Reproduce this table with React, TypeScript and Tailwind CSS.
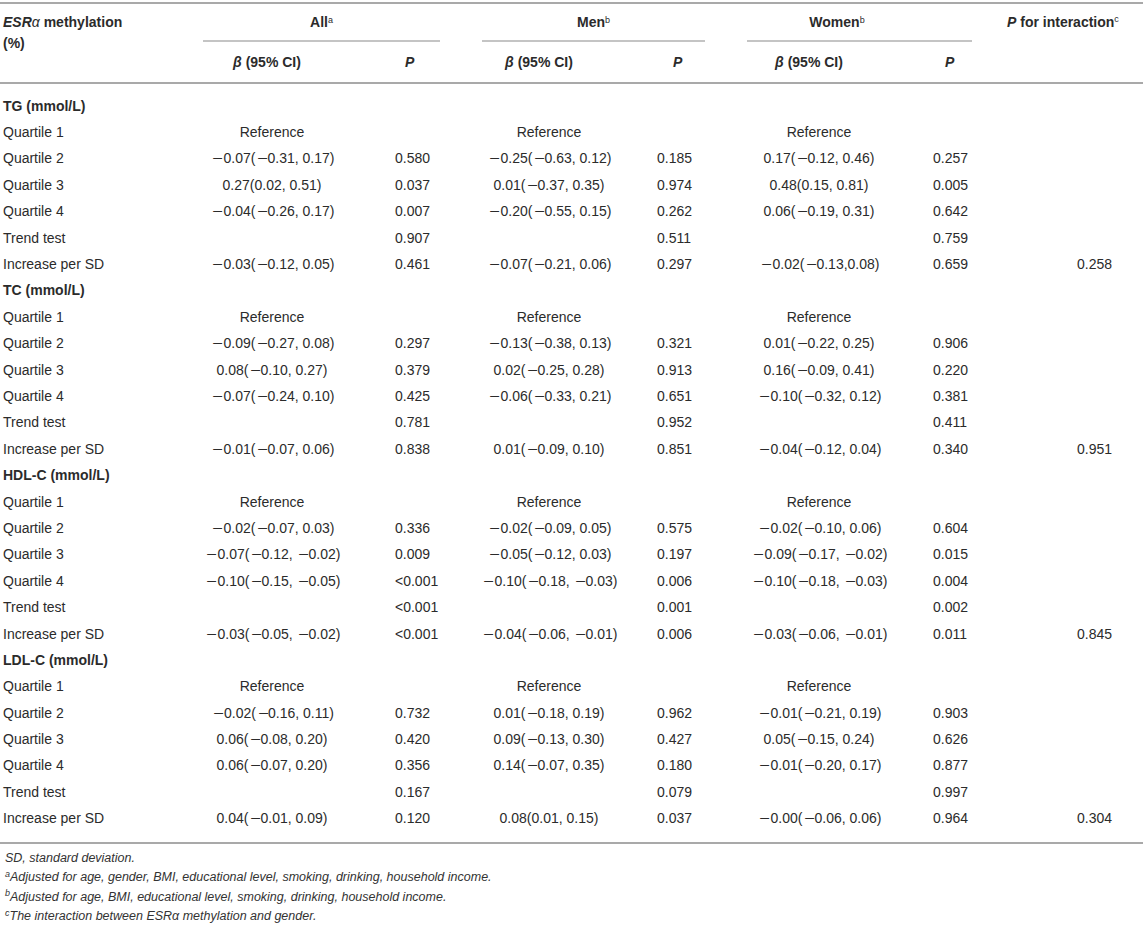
const COLS = "grid grid-cols-[203px_138px_129px_158px_112px_158px_102px_143px]";

type Row = {
  label: string;
  all?: string;
  allP?: string;
  men?: string;
  menP?: string;
  women?: string;
  womenP?: string;
  inter?: string;
};

type Group = { title: string; rows: Row[] };

const REF = { all: "Reference", men: "Reference", women: "Reference" };

const GROUPS: Group[] = [
  {
    title: "TG (mmol/L)",
    rows: [
      { label: "Quartile 1", ...REF },
      { label: "Quartile 2", all: "−0.07(−0.31, 0.17)", allP: "0.580", men: "−0.25(−0.63, 0.12)", menP: "0.185", women: "0.17(−0.12, 0.46)", womenP: "0.257" },
      { label: "Quartile 3", all: "0.27(0.02, 0.51)", allP: "0.037", men: "0.01(−0.37, 0.35)", menP: "0.974", women: "0.48(0.15, 0.81)", womenP: "0.005" },
      { label: "Quartile 4", all: "−0.04(−0.26, 0.17)", allP: "0.007", men: "−0.20(−0.55, 0.15)", menP: "0.262", women: "0.06(−0.19, 0.31)", womenP: "0.642" },
      { label: "Trend test", allP: "0.907", menP: "0.511", womenP: "0.759" },
      { label: "Increase per SD", all: "−0.03(−0.12, 0.05)", allP: "0.461", men: "−0.07(−0.21, 0.06)", menP: "0.297", women: "−0.02(−0.13,0.08)", womenP: "0.659", inter: "0.258" },
    ],
  },
  {
    title: "TC (mmol/L)",
    rows: [
      { label: "Quartile 1", ...REF },
      { label: "Quartile 2", all: "−0.09(−0.27, 0.08)", allP: "0.297", men: "−0.13(−0.38, 0.13)", menP: "0.321", women: "0.01(−0.22, 0.25)", womenP: "0.906" },
      { label: "Quartile 3", all: "0.08(−0.10, 0.27)", allP: "0.379", men: "0.02(−0.25, 0.28)", menP: "0.913", women: "0.16(−0.09, 0.41)", womenP: "0.220" },
      { label: "Quartile 4", all: "−0.07(−0.24, 0.10)", allP: "0.425", men: "−0.06(−0.33, 0.21)", menP: "0.651", women: "−0.10(−0.32, 0.12)", womenP: "0.381" },
      { label: "Trend test", allP: "0.781", menP: "0.952", womenP: "0.411" },
      { label: "Increase per SD", all: "−0.01(−0.07, 0.06)", allP: "0.838", men: "0.01(−0.09, 0.10)", menP: "0.851", women: "−0.04(−0.12, 0.04)", womenP: "0.340", inter: "0.951" },
    ],
  },
  {
    title: "HDL-C (mmol/L)",
    rows: [
      { label: "Quartile 1", ...REF },
      { label: "Quartile 2", all: "−0.02(−0.07, 0.03)", allP: "0.336", men: "−0.02(−0.09, 0.05)", menP: "0.575", women: "−0.02(−0.10, 0.06)", womenP: "0.604" },
      { label: "Quartile 3", all: "−0.07(−0.12, −0.02)", allP: "0.009", men: "−0.05(−0.12, 0.03)", menP: "0.197", women: "−0.09(−0.17, −0.02)", womenP: "0.015" },
      { label: "Quartile 4", all: "−0.10(−0.15, −0.05)", allP: "<0.001", men: "−0.10(−0.18, −0.03)", menP: "0.006", women: "−0.10(−0.18, −0.03)", womenP: "0.004" },
      { label: "Trend test", allP: "<0.001", menP: "0.001", womenP: "0.002" },
      { label: "Increase per SD", all: "−0.03(−0.05, −0.02)", allP: "<0.001", men: "−0.04(−0.06, −0.01)", menP: "0.006", women: "−0.03(−0.06, −0.01)", womenP: "0.011", inter: "0.845" },
    ],
  },
  {
    title: "LDL-C (mmol/L)",
    rows: [
      { label: "Quartile 1", ...REF },
      { label: "Quartile 2", all: "−0.02(−0.16, 0.11)", allP: "0.732", men: "0.01(−0.18, 0.19)", menP: "0.962", women: "−0.01(−0.21, 0.19)", womenP: "0.903" },
      { label: "Quartile 3", all: "0.06(−0.08, 0.20)", allP: "0.420", men: "0.09(−0.13, 0.30)", menP: "0.427", women: "0.05(−0.15, 0.24)", womenP: "0.626" },
      { label: "Quartile 4", all: "0.06(−0.07, 0.20)", allP: "0.356", men: "0.14(−0.07, 0.35)", menP: "0.180", women: "−0.01(−0.20, 0.17)", womenP: "0.877" },
      { label: "Trend test", allP: "0.167", menP: "0.079", womenP: "0.997" },
      { label: "Increase per SD", all: "0.04(−0.01, 0.09)", allP: "0.120", men: "0.08(0.01, 0.15)", menP: "0.037", women: "−0.00(−0.06, 0.06)", womenP: "0.964", inter: "0.304" },
    ],
  },
];

// the source table's minus is a longer dash than the font's own glyph
function Num({ value }: { value?: string }) {
  if (!value) return null;
  const parts = value.split("−");
  return (
    <>
      {parts.map((p, i) => (
        <span key={i}>
          {i > 0 && (
            <span className={`inline-block ${i === 1 && parts[0] === "" ? "w-[14px]" : "w-[12px]"}`}>
              <span className="inline-block scale-x-[1.3] origin-left">−</span>
            </span>
          )}
          {p}
        </span>
      ))}
    </>
  );
}

function Sup({ children }: { children: string }) {
  return <sup className="text-[9px] font-normal">{children}</sup>;
}

function DataRow({ row }: { row: Row }) {
  return (
    <div className={`${COLS} h-[26.4px] items-center whitespace-nowrap`}>
      <div className="pl-[3px]">{row.label}</div>
      <div className="text-center"><Num value={row.all} /></div>
      <div className="pl-[54px]">{row.allP}</div>
      <div className="text-center"><Num value={row.men} /></div>
      <div className="pl-[29px]">{row.menP}</div>
      <div className="text-center"><Num value={row.women} /></div>
      <div className="pl-[35px]">{row.womenP}</div>
      <div className="pl-[77px]">{row.inter}</div>
    </div>
  );
}

export default function App() {
  return (
    <div className="w-[1143px] bg-white text-[14px] text-[#2b2b2b] font-['Liberation_Sans',Arial,sans-serif] pt-[2px]">
      {/* Header */}
      <div className="border-t-2 border-b-2 border-[#a9a9a9]">
        <div className={`${COLS} grid-rows-[38px] font-bold`}>
          <div className="pl-[3px] pt-[8px] leading-[21px] whitespace-nowrap">
            <span className="italic">ESR</span>
            <span className="italic font-normal">α</span> methylation
            <br />
            (%)
          </div>
          <div className="col-span-2 h-full flex flex-col mr-[30px]">
            <div className="flex-1 flex items-center justify-center pt-[1px]">
              <span>All<Sup>a</Sup></span>
            </div>
            <div className="border-b-2 border-[#c4c4c4]" />
          </div>
          <div className="col-span-2 h-full flex flex-col ml-[12px] mr-[35px]">
            <div className="flex-1 flex items-center justify-center pt-[1px]">
              <span>Men<Sup>b</Sup></span>
            </div>
            <div className="border-b-2 border-[#c4c4c4]" />
          </div>
          <div className="col-span-2 h-full flex flex-col ml-[7px] mr-[28px]">
            <div className="flex-1 flex items-center justify-center pr-[45px] pt-[1px]">
              <span>Women<Sup>b</Sup></span>
            </div>
            <div className="border-b-2 border-[#c4c4c4]" />
          </div>
          <div className="h-full flex items-center pl-[7px] whitespace-nowrap pb-[2px]">
            <span>
              <i>P</i> for interaction<Sup>c</Sup>
            </span>
          </div>
        </div>
        <div className={`${COLS} h-[40px] items-center font-bold whitespace-nowrap`}>
          <div />
          <div className="text-center pr-[10px]">
            <i>β</i> (95% CI)
          </div>
          <div className="pl-[64px] italic">P</div>
          <div className="text-center pr-[20px]">
            <i>β</i> (95% CI)
          </div>
          <div className="pl-[45px] italic">P</div>
          <div className="text-center pr-[20px]">
            <i>β</i> (95% CI)
          </div>
          <div className="pl-[47px] italic">P</div>
          <div />
        </div>
      </div>

      {/* Body */}
      <div className="pt-[9px] pb-[10px] border-b-2 border-[#a9a9a9]">
        {GROUPS.map((g) => (
          <div key={g.title}>
            <div className="h-[26.4px] flex items-center pl-[3px] font-bold">{g.title}</div>
            {g.rows.map((r) => (
              <DataRow key={r.label} row={r} />
            ))}
          </div>
        ))}
      </div>

      {/* Footnotes */}
      <div className="pt-[5px] pl-[5px] italic text-[12.5px] leading-[19.5px] text-[#333]">
        <p>SD, standard deviation.</p>
        <p>
          <Sup>a</Sup>Adjusted for age, gender, BMI, educational level, smoking, drinking, household income.
        </p>
        <p>
          <Sup>b</Sup>Adjusted for age, BMI, educational level, smoking, drinking, household income.
        </p>
        <p>
          <Sup>c</Sup>The interaction between ESRα methylation and gender.
        </p>
      </div>
    </div>
  );
}
